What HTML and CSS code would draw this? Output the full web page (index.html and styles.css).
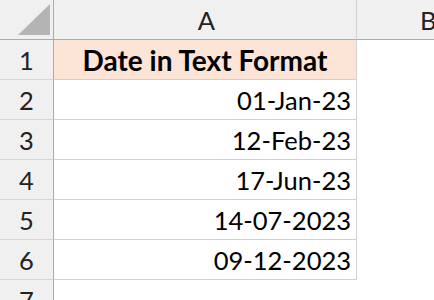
FILE: index.html
```html
<!DOCTYPE html>
<html>
<head>
<meta charset="utf-8">
<link rel="stylesheet" href="styles.css">
</head>
<body>
<div class="sheet">
  <div class="corner"><span class="tri"></span></div>
  <div class="colhead">A</div>
  <div class="colhead last">B</div>

  <div class="rowhead">1</div>
  <div class="cell title">Date in Text Format</div>
  <div class="blank"></div>

  <div class="rowhead">2</div>
  <div class="cell">01-Jan-23</div>
  <div class="blank"></div>

  <div class="rowhead">3</div>
  <div class="cell">12-Feb-23</div>
  <div class="blank"></div>

  <div class="rowhead">4</div>
  <div class="cell">17-Jun-23</div>
  <div class="blank"></div>

  <div class="rowhead">5</div>
  <div class="cell">14-07-2023</div>
  <div class="blank"></div>

  <div class="rowhead">6</div>
  <div class="cell">09-12-2023</div>
  <div class="blank"></div>

  <div class="rowhead">7</div>
  <div class="empty"></div>
  <div class="blank"></div>
</div>
</body>
</html>
```
FILE: styles.css
```css
html, body {
  margin: 0;
  padding: 0;
  background: #ffffff;
  overflow: hidden;
}
body {
  font-family: Lato, "Open Sans", sans-serif;
  font-size: 25.5px;
  color: #000;
}
.sheet {
  display: grid;
  grid-template-columns: 54px 303px 1fr;
  grid-template-rows: repeat(8, 40px);
  width: 434px;
  height: 300px;
  overflow: hidden;
}
.sheet > div {
  box-sizing: border-box;
}
.corner {
  background: #f0f0f0;
  border-right: 1px solid #ababab;
  border-bottom: 1px solid #ababab;
  position: relative;
}
.tri {
  position: absolute;
  left: 18px;
  top: 4px;
  width: 32px;
  height: 31px;
  background: #b4b4b4;
  clip-path: polygon(100% 0, 100% 100%, 0 100%);
}
.colhead {
  background: #f0f0f0;
  border-bottom: 1px solid #ababab;
  border-right: 1px solid #d2d2d2;
  display: flex;
  align-items: center;
  justify-content: center;
  color: #222;
  padding-left: 3px;
}
.colhead.last {
  justify-content: flex-start;
  padding-left: 63px;
  border-right: none;
}
.rowhead {
  background: #f0f0f0;
  border-right: 1px solid #ababab;
  border-bottom: 1px solid #d6d6d6;
  display: flex;
  align-items: center;
  justify-content: center;
  color: #222;
}
.cell {
  border-right: 1px solid #d0d0d0;
  border-bottom: 1px solid #d0d0d0;
  display: flex;
  align-items: center;
  justify-content: flex-end;
  padding-right: 5px;
}
.title {
  background: #fce4d6;
  font-weight: 700;
  font-size: 28px;
  justify-content: center;
  padding-right: 0;
}
.blank, .empty {
  background: #fff;
}
```
